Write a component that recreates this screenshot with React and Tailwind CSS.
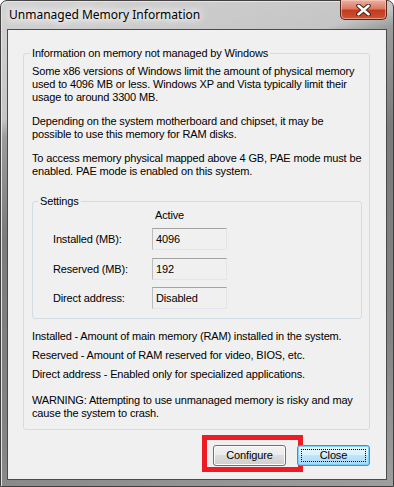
import React from "react";

const info = [
  [
    "Some x86 versions of Windows limit the amount of physical memory",
    "used to 4096 MB or less. Windows XP and Vista typically limit their",
    "usage to around 3300 MB.",
  ],
  [
    "Depending on the system motherboard and chipset, it may be",
    "possible to use this memory for RAM disks.",
  ],
  [
    "To access memory physical mapped above 4 GB, PAE mode must be",
    "enabled. PAE mode is enabled on this system.",
  ],
];

const settings = [
  { label: "Installed (MB):", value: "4096", gap: "mt-[6px]" },
  { label: "Reserved (MB):", value: "192", gap: "mt-[8px]" },
  { label: "Direct address:", value: "Disabled", gap: "mt-[7px]" },
];

const notes = [
  "Installed - Amount of main memory (RAM) installed in the system.",
  "Reserved - Amount of RAM reserved for video, BIOS, etc.",
  "Direct address - Enabled only for specialized applications.",
];

function Lines({ lines }) {
  return lines.map((line) => (
    <div key={line} className="whitespace-nowrap">
      {line}
    </div>
  ));
}

function CloseGlyph() {
  return (
    <svg width="15" height="12" viewBox="0 0 15 12">
      <path d="M2.5 1.8 L12.5 10.2 M12.5 1.8 L2.5 10.2" stroke="#4a2016" strokeWidth="4.6" strokeLinecap="round" />
      <path d="M2.5 1.8 L12.5 10.2 M12.5 1.8 L2.5 10.2" stroke="#ffffff" strokeWidth="2.6" strokeLinecap="round" />
    </svg>
  );
}

export default function App() {
  return (
    <div className="h-[487px] w-[394px] overflow-hidden bg-white font-['Liberation_Sans',Arial,sans-serif] text-[11px] leading-[13px] tracking-[-0.15px] text-black">
      <div className="flex h-[487px] w-[394px] flex-col rounded-t-[7px] border border-[#3f3f3f] bg-[linear-gradient(164deg,#d3d3d3_0%,#c5c5c5_20%,#9c9c9c_23%,#7b7b7b_40%,#848484_75%,#9e9e9e_100%)] px-[6px] pb-[6px] shadow-[inset_1px_1px_0_#e4e4e4]">
        {/* title bar */}
        <div className="flex h-[28px] items-start">
          <span className="ml-[2px] mt-[6px] font-['Noto_Sans',sans-serif] text-[12px] leading-[16px] tracking-normal text-black [text-shadow:0_0_6px_#fff,0_0_10px_#fff,0_0_14px_#fff,0_0_18px_#fff]">
            Unmanaged Memory Information
          </span>
          <button className="-mt-px ml-auto flex h-[20px] w-[47px] items-center justify-center rounded-b-[5px] border border-t-0 border-[#5b2418] bg-[linear-gradient(to_bottom,#e9b2a3_0%,#dc7a62_45%,#c53a1e_55%,#cc5434_100%)] shadow-[inset_0_0_0_1px_rgba(255,210,200,0.55)]">
            <CloseGlyph />
          </button>
        </div>

        {/* client area */}
        <div className="flex flex-1 flex-col border border-[#4b4b4b] bg-[#f0f0f0]">
          <fieldset className="ml-[15px] mr-[16px] mt-[17px] rounded-[3px] border border-[#d3dce3] pb-[9px] pl-[8px] pr-[7px] pt-[5px]">
            <legend className="-ml-[2px] px-[2px]">Information on memory not managed by Windows</legend>

            {info.map((para, i) => (
              <div key={i} className={i > 0 ? "mt-[11px]" : ""}>
                <Lines lines={para} />
              </div>
            ))}

            <fieldset className="mt-[17px] rounded-[3px] border border-[#d3dce3] pb-[9px] pl-[20px] pt-[1px]">
              <legend className="-ml-[15px] px-[2px]">Settings</legend>
              <div className="pl-[102px]">Active</div>
              {settings.map((s) => (
                <div key={s.label} className={`flex items-center ${s.gap}`}>
                  <div className="w-[99px]">{s.label}</div>
                  <div className="flex h-[22px] w-[75px] items-center border border-b-[#e2e6ea] border-l-[#bcbcbc] border-r-[#e2e6ea] border-t-[#a3a3a3] pl-[3px]">
                    {s.value}
                  </div>
                </div>
              ))}
            </fieldset>

            <div className="mt-[11px]">{notes[0]}</div>
            <div className="mt-[6px]">{notes[1]}</div>
            <div className="mt-[6px]">{notes[2]}</div>

            <div className="mt-[13px]">
              <Lines
                lines={[
                  "WARNING: Attempting to use unmanaged memory is risky and may",
                  "cause the system to crash.",
                ]}
              />
            </div>
          </fieldset>

          {/* buttons */}
          <div className="mr-[16px] mt-[15px] flex justify-end gap-[11px]">
            <div className="relative">
              <button className="h-[21px] w-[73px] rounded-[3px] border border-[#707070] bg-[linear-gradient(to_bottom,#f2f2f2_0%,#ebebeb_50%,#dddddd_50%,#cfcfcf_100%)] shadow-[inset_0_0_0_1px_#fbfbfb]">
                Configure
              </button>
              <div className="pointer-events-none absolute left-[-11px] top-[-10px] h-[37px] w-[101px] border-[5px] border-[#ed1c24]" />
            </div>
            <button className="relative h-[21px] w-[73px] rounded-[3px] border border-[#2e9ad8] bg-[linear-gradient(to_bottom,#eaf6fd_0%,#d9f0fc_50%,#bee6fd_50%,#a7d9f5_100%)] shadow-[inset_0_0_0_1px_#7fd0f7]">
              Close
              <span className="pointer-events-none absolute inset-[3px] border border-dotted border-black" />
            </button>
          </div>
        </div>
      </div>
    </div>
  );
}
